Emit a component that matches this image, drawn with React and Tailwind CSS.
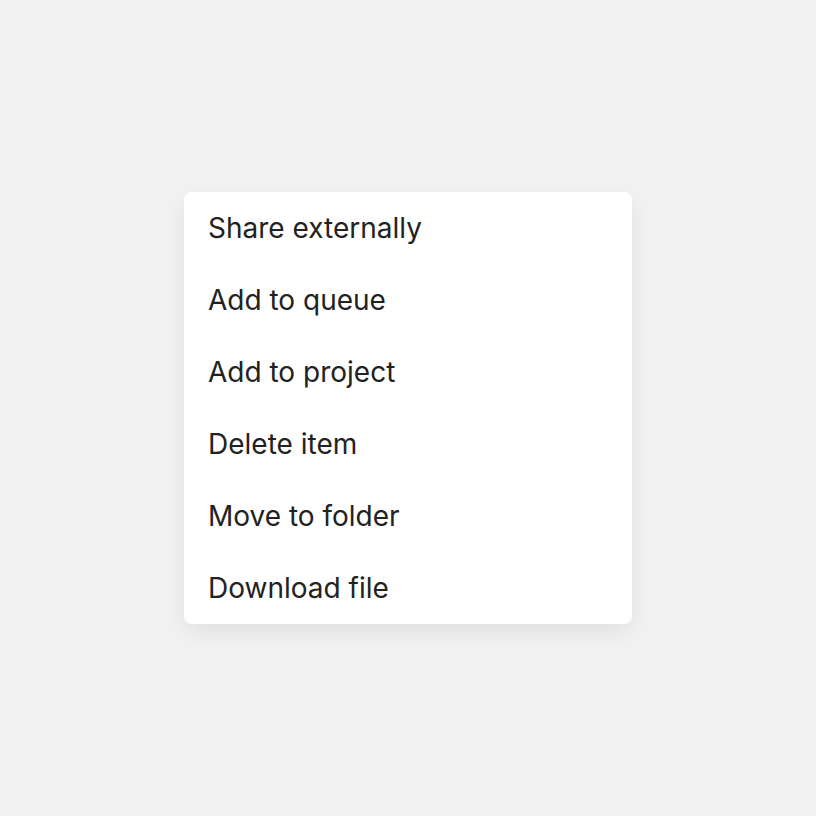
export default function App() {
  const items = ["Share externally", "Add to queue", "Add to project", "Delete item", "Move to folder", "Download file"];
  return (
    <div className="w-[816px] h-[816px] bg-[#f2f2f2] flex items-start justify-center pt-[192px]" style={{ fontFamily: "Inter, 'Noto Sans', sans-serif" }}>
      <div className="w-[448px] bg-white rounded-lg shadow-[0_8px_24px_rgba(0,0,0,0.08)] flex flex-col">
        {items.map((t) => (
          <div key={t} className="h-[72px] flex items-center px-6 text-[28px] text-[#222222]">{t}</div>
        ))}
      </div>
    </div>
  );
}
